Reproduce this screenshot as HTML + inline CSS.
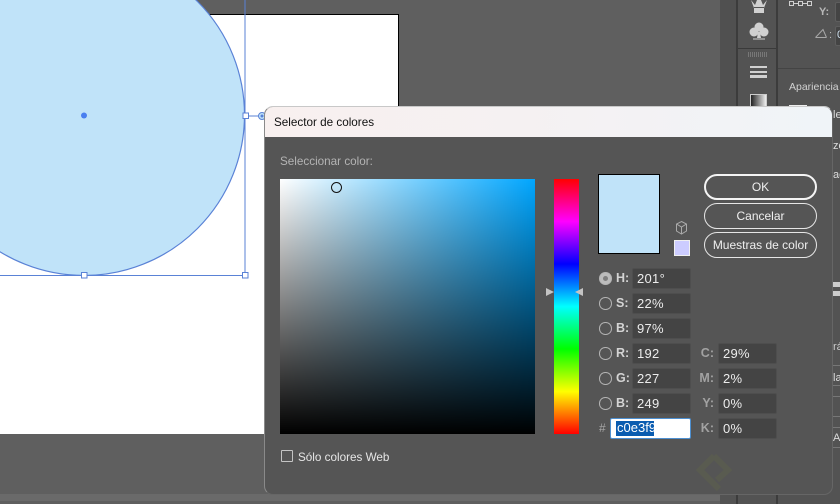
<!DOCTYPE html>
<html><head><meta charset="utf-8">
<style>
html,body{margin:0;padding:0}
body{width:840px;height:504px;overflow:hidden;position:relative;background:#5f5f5f;font-family:"Liberation Sans",sans-serif}
.a{position:absolute}
.t{position:absolute;white-space:nowrap;line-height:16px;font-size:11.7px}
.inp{position:absolute;width:59px;height:21px;box-sizing:border-box;background:#444;border:1px solid #4e4e4e;border-radius:2px;color:#ececec;font-size:13px;line-height:19px;padding-left:4px;letter-spacing:.3px}
.lab{position:absolute;color:#d4d4d4;font-size:12.5px;font-weight:bold;line-height:16px}
.labg{position:absolute;color:#a2a2a2;font-size:12.5px;font-weight:bold;line-height:16px;text-align:right;width:16px}
.rad{position:absolute;left:599px;width:10.5px;height:10.5px;border:1.5px solid #b4b4b4;border-radius:50%}
.btn{position:absolute;left:704px;width:113px;height:26px;box-sizing:border-box;border:1px solid #e6e6e6;border-radius:13px;color:#efefef;font-size:12px;text-align:center;line-height:25px}
</style></head><body>
<!-- canvas -->
<div class="a" style="left:-2px;top:14px;width:399px;height:419px;background:#fff;border:1px solid #000;box-sizing:content-box"></div>
<svg class="a" style="left:0;top:0" width="420" height="300">
<circle cx="84" cy="115" r="160.500" fill="#c0e3f9" stroke="#5a82d6" stroke-width="1.2"/>
<line x1="245" y1="0" x2="245" y2="275" stroke="#5a82d6"/>
<line x1="0" y1="275.500" x2="245" y2="275.500" stroke="#5a82d6"/>
<line x1="245" y1="116" x2="262" y2="116" stroke="#5a82d6"/>
<circle cx="84" cy="115.500" r="3" fill="#4a7ff0"/>
<rect x="243" y="113" width="5.500" height="5.500" fill="#fff" stroke="#5a82d6"/>
<rect x="81.500" y="272.500" width="5.500" height="5.500" fill="#fff" stroke="#5a82d6"/>
<rect x="242.500" y="272.500" width="5.500" height="5.500" fill="#fff" stroke="#5a82d6"/>
<circle cx="262" cy="116" r="3.500" fill="#c0e3f9" stroke="#5a82d6"/>
<circle cx="262" cy="116" r="1.500" fill="#5a82d6"/>
</svg>
<!-- right side panels -->
<div class="a" style="left:720px;top:0;width:16px;height:504px;background:#505050"></div>
<div class="a" style="left:736px;top:0;width:42px;height:504px;background:#535353;border-left:2px solid #3c3c3c;border-right:2px solid #3c3c3c;box-sizing:border-box"></div>
<div class="a" style="left:778px;top:0;width:62px;height:504px;background:#535353"></div>
<div class="a" style="left:738px;top:48px;width:38px;height:1px;background:#3a3a3a"></div>
<div class="a" style="left:778px;top:68px;width:62px;height:1px;background:#444"></div>
<div class="a" style="left:748px;top:52px;width:19px;height:5px;background:repeating-linear-gradient(90deg,#777 0 1px,#535353 1px 2px)"></div>
<div class="a" style="left:750px;top:66px;width:17px;height:2px;background:#d0d0d0"></div>
<div class="a" style="left:750px;top:71px;width:17px;height:2px;background:#d0d0d0"></div>
<div class="a" style="left:750px;top:75px;width:17px;height:3px;background:#d0d0d0"></div>
<div class="a" style="left:750px;top:94px;width:17px;height:13px;box-sizing:border-box;border:1px solid #ccc;background:linear-gradient(90deg,#222,#eee)"></div>
<svg class="a" style="left:744px;top:0" width="30" height="42">
<path d="M7 0L10 8H20L23 0L19 5L17 0H13L11 5ZM10 7H20V13H10Z" fill="#d0d0d0"/>
<circle cx="15" cy="27" r="4.500" fill="#d0d0d0"/><circle cx="10" cy="32" r="4.500" fill="#d0d0d0"/><circle cx="20" cy="32" r="4.500" fill="#d0d0d0"/>
<path d="M14 32H16L17 38H13ZM9 38.500H21V39.500H9Z" fill="#d0d0d0"/>
</svg>
<svg class="a" style="left:785px;top:0" width="55" height="45">
<g fill="none" stroke="#cfcfcf"><rect x="4.500" y="1.500" width="4" height="4"/><rect x="13.500" y="1.500" width="4" height="4"/><rect x="22.500" y="1.500" width="4" height="4"/><path d="M8.500 3.500H13.500M17.500 3.500H22.500"/>
<path d="M30.500 37.500H41.500M30.500 37.500L38 29.500L41.500 37.500" stroke="#a8a8a8"/></g>
</svg>
<div class="t" style="left:819px;top:4px;font-size:11px;font-weight:bold;color:#b8b8b8">Y:</div>
<div class="t" style="left:829px;top:27px;font-size:11px;color:#b8b8b8">:</div>
<div class="a" style="left:835px;top:26px;width:12px;height:20px;background:#444;border:1px solid #5e5e5e;border-radius:2px;box-sizing:border-box"></div>
<div class="t" style="left:837px;top:27px;font-size:11px;color:#cfe0ef">0</div>
<div class="a" style="left:835px;top:2px;width:12px;height:20px;background:#444;border:1px solid #5e5e5e;border-radius:2px;box-sizing:border-box"></div>
<div class="t" style="left:789px;top:79px;font-size:10.500px;color:#d2d2d2">Apariencia</div>
<div class="a" style="left:789px;top:105px;width:18px;height:3px;background:#eee"></div>
<div class="t" style="left:833px;top:107px;font-size:11px;color:#ddd">le</div>
<div class="t" style="left:833px;top:138px;font-size:11px;color:#ddd">zo</div>
<div class="t" style="left:833px;top:167px;font-size:11px;color:#ddd">ao</div>
<div class="a" style="left:832px;top:282px;width:8px;height:5px;background:#ccc"></div>
<div class="a" style="left:832px;top:291px;width:8px;height:5px;background:#ccc"></div>
<div class="t" style="left:833px;top:339px;font-size:11px;color:#ccc">ráj</div>
<div class="t" style="left:833px;top:370px;font-size:11px;color:#ddd">la</div>
<div class="t" style="left:833px;top:430px;font-size:11px;color:#ddd">Ali</div>
<div class="a" style="left:832px;top:365px;width:8px;height:1px;background:#777"></div>
<div class="a" style="left:832px;top:385px;width:8px;height:1px;background:#777"></div>
<div class="a" style="left:832px;top:396px;width:8px;height:1px;background:#777"></div>
<div class="a" style="left:832px;top:416px;width:8px;height:1px;background:#777"></div>
<div class="a" style="left:832px;top:427px;width:8px;height:1px;background:#777"></div>
<div class="a" style="left:832px;top:447px;width:8px;height:1px;background:#777"></div>
<!-- bottom -->
<div class="a" style="left:0;top:434px;width:265px;height:70px;background:#5f5f5f"></div>
<div class="a" style="left:0;top:494px;width:720px;height:7px;background:#6a6a6a"></div>
<div class="a" style="left:720px;top:494px;width:120px;height:10px;background:#535353"></div>
<div class="a" style="left:736px;top:494px;width:2px;height:10px;background:#3c3c3c"></div>
<div class="a" style="left:776px;top:494px;width:2px;height:10px;background:#3c3c3c"></div>
<!-- dialog -->
<div class="a" style="left:264px;top:106px;width:569px;height:389px;box-sizing:border-box;border:1px solid #666;border-top-color:#c8c8c8;border-left-color:#8a8a8a;border-radius:9px;background:#555;overflow:hidden">
<div class="a" style="left:0;top:0;width:100%;height:30px;background:linear-gradient(90deg,#f8f0ef 0%,#f5f1f2 45%,#f0f4f8 100%)"></div>
</div>
<div class="t" style="left:274px;top:115px;color:#111">Selector de colores</div>
<div class="t" style="left:280px;top:154px;color:#b4b4b4">Seleccionar color:</div>
<!-- picker -->
<div class="a" style="left:280px;top:179px;width:255px;height:255px;background:linear-gradient(180deg,rgba(0,0,0,0),#000),linear-gradient(90deg,#fff,#00a6ff)"></div>
<div class="a" style="left:330.500px;top:181.500px;width:9px;height:9px;border:1.500px solid #111;border-radius:50%"></div>
<!-- hue -->
<div class="a" style="left:554px;top:179px;width:25px;height:255px;background:linear-gradient(180deg,#f00 0%,#f0f 16.67%,#00f 33.33%,#0ff 50%,#0f0 66.67%,#ff0 83.33%,#f00 100%)"></div>
<svg class="a" style="left:544px;top:286px" width="44" height="12"><path d="M2 2L10 6L2 10Z M39 2L31 6L39 10Z" fill="#c4c4c4"/></svg>
<!-- preview -->
<div class="a" style="left:598px;top:174px;width:62px;height:80px;box-sizing:border-box;border:1px solid #000;background:#c0e3f9"></div>
<svg class="a" style="left:674px;top:220px" width="16" height="16"><path d="M7.500 1.500L12.500 4V11L7.500 14L2.500 11V4ZM2.500 4L7.500 7L12.500 4M7.500 7V14" fill="none" stroke="#aaa"/></svg>
<div class="a" style="left:674px;top:240px;width:16px;height:16px;box-sizing:border-box;border:1px solid #f0f0f0;background:#ccccff"></div>
<!-- buttons -->
<div class="btn" style="top:174px;border:2px solid #f4f4f4;line-height:23px">OK</div>
<div class="btn" style="top:203px">Cancelar</div>
<div class="btn" style="top:232px">Muestras de color</div>
<!-- radios -->
<div class="rad" style="top:272px;background:#bcbcbc"></div>
<div class="a" style="left:603px;top:276px;width:5px;height:5px;border-radius:50%;background:#7e7e7e"></div>
<div class="rad" style="top:297px"></div>
<div class="rad" style="top:322px"></div>
<div class="rad" style="top:347px"></div>
<div class="rad" style="top:372px"></div>
<div class="rad" style="top:397px"></div>
<div class="lab" style="left:616px;top:270px">H:</div>
<div class="lab" style="left:616px;top:295px">S:</div>
<div class="lab" style="left:616px;top:320px">B:</div>
<div class="lab" style="left:616px;top:345px">R:</div>
<div class="lab" style="left:616px;top:370px">G:</div>
<div class="lab" style="left:616px;top:395px">B:</div>
<div class="inp" style="left:632px;top:268px">201°</div>
<div class="inp" style="left:632px;top:293px">22%</div>
<div class="inp" style="left:632px;top:318px">97%</div>
<div class="inp" style="left:632px;top:343px">192</div>
<div class="inp" style="left:632px;top:368px">227</div>
<div class="inp" style="left:632px;top:393px">249</div>
<div class="labg" style="left:698px;top:345px">C:</div>
<div class="labg" style="left:698px;top:370px">M:</div>
<div class="labg" style="left:698px;top:395px">Y:</div>
<div class="labg" style="left:698px;top:420px">K:</div>
<div class="inp" style="left:718px;top:343px">29%</div>
<div class="inp" style="left:718px;top:368px">2%</div>
<div class="inp" style="left:718px;top:393px">0%</div>
<div class="inp" style="left:718px;top:418px">0%</div>
<div class="t" style="left:599px;top:420px;color:#a8a8a8;font-size:12px">#</div>
<div class="a" style="left:610px;top:418px;width:81px;height:21px;box-sizing:border-box;background:#fff;border:1px solid #4d8fd0;border-radius:2px"></div>
<div class="a" style="left:616px;top:421px;width:38px;height:15px;background:#0a5cb0"></div>
<div class="t" style="left:617px;top:420px;font-size:13px;color:#fff">c0e3f9</div>
<!-- checkbox -->
<div class="a" style="left:281px;top:450px;width:12px;height:12px;box-sizing:border-box;border:1px solid #c4c4c4;border-radius:1px"></div>
<div class="t" style="left:298px;top:450px;color:#e6e6e6">Sólo colores Web</div>
<!-- watermark -->
<svg class="a" style="left:690px;top:450px" width="60" height="54"><path d="M24 6L10 20L29 39M24 6L38 20L27 30" fill="none" stroke="#595b50" stroke-width="6"/></svg>
</body></html>
